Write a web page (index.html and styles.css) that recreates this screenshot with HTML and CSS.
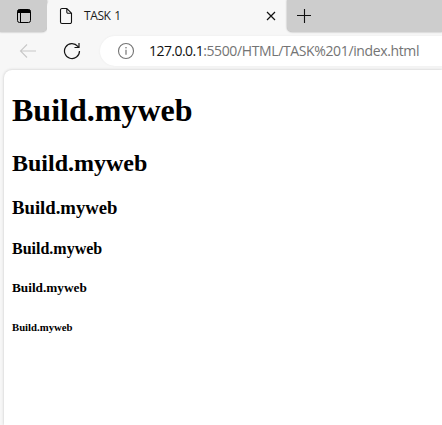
FILE: index.html
```html
<!DOCTYPE html>
<html lang="en">
<head>
<meta charset="utf-8">
<title>TASK 1</title>
<link rel="stylesheet" href="styles.css">
</head>
<body>
<div class="tabs">
  <div class="tab-actions">
    <svg width="16" height="16" viewBox="0 0 16 16"><rect x="1.5" y="1.5" width="13" height="13" rx="2" fill="none" stroke="#000"/><path d="M1.5 5V3.5a2 2 0 0 1 2-2h9a2 2 0 0 1 2 2V5z"/><path d="M4.5 5v9.5" stroke="#000"/></svg>
  </div>
  <div class="tab">
    <svg class="page-icon" width="14" height="18" viewBox="0 0 14 18" fill="none" stroke="#111" stroke-width="1.1"><path d="M7.8 1.5H3A1.5 1.5 0 0 0 1.5 3v12A1.5 1.5 0 0 0 3 16.500h8A1.500 1.500 0 0 0 12.500 15V6.200zM7.800 1.500V5a1.200 1.200 0 0 0 1.200 1.200h3.500"/></svg>
    <span class="title">TASK 1</span>
    <svg class="close" width="10" height="10" viewBox="0 0 10 10" stroke="#111" stroke-width="1.2"><path d="M1 1l8 8M9 1L1 9"/></svg>
  </div>
  <div class="tab-rest">
    <svg width="16" height="16" viewBox="0 0 16 16" stroke="#111" stroke-width="1.1"><path d="M1 7.500h14M8.500 1v14"/></svg>
  </div>
</div>
<div class="toolbar">
  <svg class="back" width="18" height="16" viewBox="0 0 18 16" fill="none" stroke="#c8c8c8" stroke-width="1.1"><path d="M8 1.500L1.500 8 8 14.500M1.500 8H17"/></svg>
  <svg class="reload" width="18" height="18" viewBox="0 0 18 18" fill="none" stroke="#151515" stroke-width="1.2"><path d="M16.500 9A7.500 7.500 0 1 1 14.800 4.300L16 5.500M16 1v4.500h-4.500"/></svg>
  <div class="address">
    <svg width="18" height="18" viewBox="0 0 18 18"><circle cx="9" cy="9" r="7.500" fill="none" stroke="#747474" stroke-width="1.100"/><path d="M9 7.800v5" stroke="#747474" stroke-width="1.200"/><circle cx="9" cy="5.700" r=".8" fill="#747474"/></svg>
    <span class="host">127.0.0.1</span><span class="path">:5500/HTML/TASK%201/index.html</span>
  </div>
</div>
<main class="page">
  <h1>Build.myweb</h1>
  <h2>Build.myweb</h2>
  <h3>Build.myweb</h3>
  <h4>Build.myweb</h4>
  <h5>Build.myweb</h5>
  <h6>Build.myweb</h6>
</main>
</body>
</html>
```
FILE: styles.css
```css
* { box-sizing: border-box; }
body {
  margin: 0;
  height: 425px;
  overflow: hidden;
  display: flex;
  flex-direction: column;
  background: #f7f7f7;
  font-family: "Liberation Serif", "Times New Roman", serif;
}
svg { display: block; flex: none; }
.tabs { display: flex; height: 32px; flex: none; font-family: "Open Sans", sans-serif; }
.tab-actions {
  width: 47px;
  padding: 8px 0 0 16px;
  background: #cdcdcd;
  border-bottom-right-radius: 5px;
  box-shadow: 0 0 2px #999;
}
.tab {
  width: 240px;
  flex: none;
  display: flex;
  align-items: center;
  padding: 0 11px 0 12px;
  background: #f7f7f7;
  border-radius: 6px 6px 0 0;
}
.title { margin-left: 11px; font-size: 12px; letter-spacing: -0.4px; word-spacing: 1px; line-height: 32px; color: #1b1b1b; white-space: nowrap; }
.close { margin-left: auto; }
.tab-rest {
  flex: 1;
  padding: 8px 0 0 9px;
  background: #cdcdcd;
  border-bottom-left-radius: 5px;
  box-shadow: 0 0 2px #999;
}
.toolbar { display: flex; height: 38px; flex: none; align-items: center; padding-left: 19px; }
.reload { margin-left: 26px; }
.address {
  flex: 1;
  display: flex;
  align-items: center;
  height: 30px;
  margin-left: 19px;
  padding-left: 17px;
  background: #fff;
  border-radius: 15px 0 0 15px;
  box-shadow: 0 0 2px #e8e8e8;
  font: 14px/30px "Open Sans", sans-serif;
  white-space: nowrap;
}
.host { margin-left: 14px; color: #111; letter-spacing: -0.55px; }
.path { color: #747474; letter-spacing: -0.37px; }
.page {
  flex: 1;
  margin-left: 4px;
  padding: 0 8px;
  background: #fff;
  border-top-left-radius: 8px;
  box-shadow: 0 0 3px #c4c4c4;
  color: #000;
}
.page h1 { margin-top: 22px; }
.page h4 { margin-top: 20.6px; }
```
